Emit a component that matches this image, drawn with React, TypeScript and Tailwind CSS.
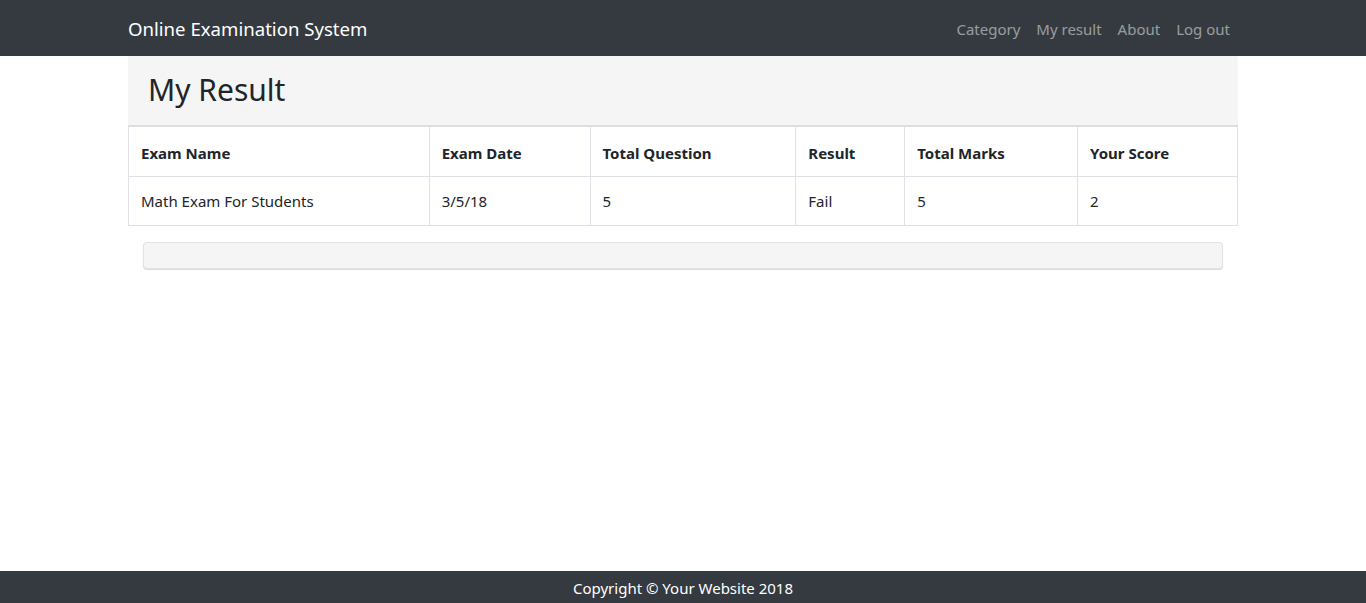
const columns = [
  { label: "Exam Name", value: "Math Exam For Students", width: "w-[301px]" },
  { label: "Exam Date", value: "3/5/18", width: "w-[161px]" },
  { label: "Total Question", value: "5", width: "w-[206px]" },
  { label: "Result", value: "Fail", width: "w-[109px]" },
  { label: "Total Marks", value: "5", width: "w-[173px]" },
  { label: "Your Score", value: "2", width: "w-[160px]" },
];

const links = ["Category", "My result", "About", "Log out"];

export default function App() {
  return (
    <div className="min-h-[603px] flex flex-col bg-white text-[#212529] font-['Noto_Sans',sans-serif]">
      <nav className="h-14 bg-[#343a40]">
        <div className="w-[1110px] mx-auto h-full flex items-center justify-between pt-0.5">
          <a className="text-[18.6px] text-white leading-none">Online Examination System</a>
          <ul className="flex">
            {links.map((l) => (
              <li key={l}>
                <a className="px-2 text-[15px] text-[rgba(255,255,255,0.5)]">{l}</a>
              </li>
            ))}
          </ul>
        </div>
      </nav>

      <main className="flex-1">
        <div className="w-[1110px] mx-auto">
          <div className="h-[71px] bg-[#f5f5f5] border-b-2 border-[#dedede] flex items-center px-5">
            <h1 className="text-[30px] leading-none pb-0.5">My Result</h1>
          </div>
          <table className="border-collapse text-[15px] table-fixed">
            <thead>
              <tr className="h-[49px]">
                {columns.map((c) => (
                  <th
                    key={c.label}
                    className={`${c.width} border border-[#dee2e6] border-t-0 px-3 pt-1 text-left font-bold`}
                  >
                    {c.label}
                  </th>
                ))}
              </tr>
            </thead>
            <tbody>
              <tr className="h-[49px]">
                {columns.map((c) => (
                  <td key={c.label} className="border border-[#dee2e6] px-3 pt-0.5">
                    {c.value}
                  </td>
                ))}
              </tr>
            </tbody>
          </table>
          <div className="mx-[15px] mt-4 h-[27px] bg-[#f5f5f5] border border-[#e3e3e3] rounded shadow-[0_1px_1px_rgba(0,0,0,0.15)]" />
        </div>
      </main>

      <footer className="h-8 bg-[#343a40] flex items-center justify-center text-white text-[15px] pt-0.5">
        Copyright © Your Website 2018
      </footer>
    </div>
  );
}
